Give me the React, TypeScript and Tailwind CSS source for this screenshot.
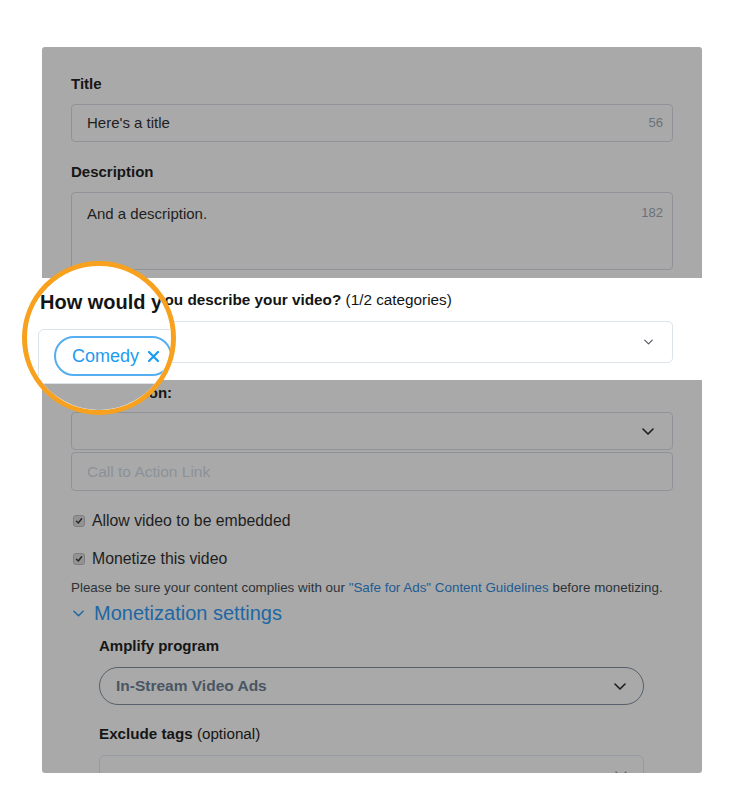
import React from 'react'

function Chevron({ className = '', w = 12, h = 7 }: { className?: string; w?: number; h?: number }) {
  return (
    <svg width={w} height={h} viewBox="0 0 12 7" fill="none" className={className}>
      <path d="M1 1l5 5 5-5" stroke="currentColor" strokeWidth="1.6" strokeLinecap="round" strokeLinejoin="round" />
    </svg>
  )
}

function Check() {
  return (
    <span className="flex h-[12px] w-[12px] shrink-0 items-center justify-center rounded-[3px] border border-[#7d7d7d] bg-[#939393]">
      <svg width="8" height="8" viewBox="0 0 8 8" fill="none">
        <path d="M1.5 4.2l1.8 1.8L6.6 1.8" stroke="#262626" strokeWidth="1.4" strokeLinecap="round" strokeLinejoin="round" />
      </svg>
    </span>
  )
}

// zoomed-in lens over the category field
function Magnifier() {
  return (
    <div className="absolute left-[22px] top-[261px] h-[154px] w-[154px] overflow-hidden rounded-full border-[5px] border-[#f8a11e] bg-white">
      <div className="absolute left-0 top-[118px] h-[60px] w-full bg-[#a9a9a9]" />
      <p className="absolute left-[13px] top-[24px] whitespace-nowrap text-[20px] font-bold leading-[24px] text-[#141414]">
        How would y
      </p>
      <div className="absolute left-[11px] top-[63px] h-[55px] w-[220px] rounded-[6px] border-[1.5px] border-[#dbe2ea]" />
      <div className="absolute left-[27px] top-[70px] flex h-[40px] w-[118px] items-center gap-[9px] rounded-full border-2 border-[#55aef0] pl-[16px] text-[18px] text-[#1d9bf0]">
        <span>Comedy</span>
        <svg width="11" height="11" viewBox="0 0 11 11" fill="none">
          <path d="M1 1l9 9M10 1l-9 9" stroke="#1d9bf0" strokeWidth="2.2" strokeLinecap="round" />
        </svg>
      </div>
      <p className="absolute left-[122px] top-[117px] whitespace-nowrap text-[15px] font-bold leading-[20px] text-[#161616]">
        on:
      </p>
      <div className="absolute left-[30px] top-[147px] h-[40px] w-[200px] rounded-[6px] border-[1.5px] border-[#8f9398]" />
    </div>
  )
}

export default function App() {
  return (
    <div className="relative min-h-[812px] w-[731px] bg-white pt-[47px] pl-[42px] font-['Liberation_Sans',Arial,sans-serif]">
      <div className="h-[726px] w-[660px] overflow-hidden rounded-[3px] bg-[#a9a9a9] px-[29px] pt-[27px]">
        <p className="text-[15px] font-bold leading-[20px] text-[#161616]">Title</p>
        <div className="mt-[10px] flex h-[38px] items-center justify-between rounded-[4px] border border-[#8f9398] pl-[15px] pr-[9px]">
          <span className="text-[15px] text-[#1e1e1e]">Here's a title</span>
          <span className="text-[13px] text-[#6a717a]">56</span>
        </div>

        <p className="mt-[20px] text-[15px] font-bold leading-[20px] text-[#161616]">Description</p>
        <div className="mt-[10px] flex h-[78px] items-start justify-between rounded-[4px] border border-[#8f9398] pl-[15px] pr-[9px] pt-[10px]">
          <span className="text-[15px] text-[#1e1e1e]">And a description.</span>
          <span className="text-[13px] text-[#6a717a]">182</span>
        </div>

        <div className="-mx-[29px] mt-[8px] h-[102px] bg-white px-[29px] pt-[12px]">
          <p className="whitespace-nowrap text-[15.3px] leading-[20px] text-[#141414]">
            <span className="font-bold">How would you describe your video?</span> (1/2 categories)
          </p>
          <div className="mt-[11px] flex h-[42px] items-center justify-end rounded-[5px] border border-[#dde3ea] pr-[19px]">
            <Chevron className="text-[#555b62]" w={9} h={6} />
          </div>
        </div>

        <p className="mt-[3px] text-[15px] font-bold leading-[20px] text-[#161616]">Call to Action:</p>
        <div className="mt-[9px] flex h-[38px] items-center justify-end rounded-[4px] border border-[#8f9398] pr-[18px]">
          <Chevron className="text-[#1e1e1e]" />
        </div>
        <div className="mt-[2px] flex h-[39px] items-center rounded-[4px] border border-[#8f9398] pl-[15px]">
          <span className="text-[15.5px] text-[#8b9198]">Call to Action Link</span>
        </div>

        <label className="mt-[20px] flex h-[20px] items-center gap-[7px] pl-[2px] text-[15.8px] text-[#1e1e1e]">
          <Check />
          Allow video to be embedded
        </label>
        <label className="mt-[18px] flex h-[20px] items-center gap-[7px] pl-[2px] text-[15.8px] text-[#1e1e1e]">
          <Check />
          Monetize this video
        </label>
        <p className="mt-[10px] whitespace-nowrap text-[13.4px] leading-[18px] text-[#2e3338]">
          Please be sure your content complies with our{' '}
          <span className="text-[#1d5c92]">"Safe for Ads" Content Guidelines</span> before monetizing.
        </p>

        <div className="mt-[4px] flex h-[24px] items-center gap-[10px] pl-[2px] text-[#1e67a4]">
          <Chevron className="text-[#1e67a4]" w={11} h={7} />
          <span className="text-[20px]">Monetization settings</span>
        </div>

        <div className="ml-[28px] mr-[29px]">
          <p className="mt-[11px] text-[15px] font-bold leading-[20px] text-[#161616]">Amplify program</p>
          <div className="mt-[11px] flex h-[38px] items-center justify-between rounded-full border border-[#56616d] pl-[16px] pr-[17px]">
            <span className="text-[15.5px] font-bold text-[#4a5663]">In-Stream Video Ads</span>
            <Chevron className="text-[#1e1e1e]" />
          </div>
          <p className="mt-[19px] text-[15.2px] leading-[20px] text-[#161616]">
            <span className="font-bold">Exclude tags</span> (optional)
          </p>
          <div className="mt-[11px] flex h-[38px] items-center justify-end rounded-[6px] border border-[#969ba1] pr-[16px]">
            <Chevron className="text-[#6b6f74]" />
          </div>
        </div>
      </div>
      <Magnifier />
    </div>
  )
}
